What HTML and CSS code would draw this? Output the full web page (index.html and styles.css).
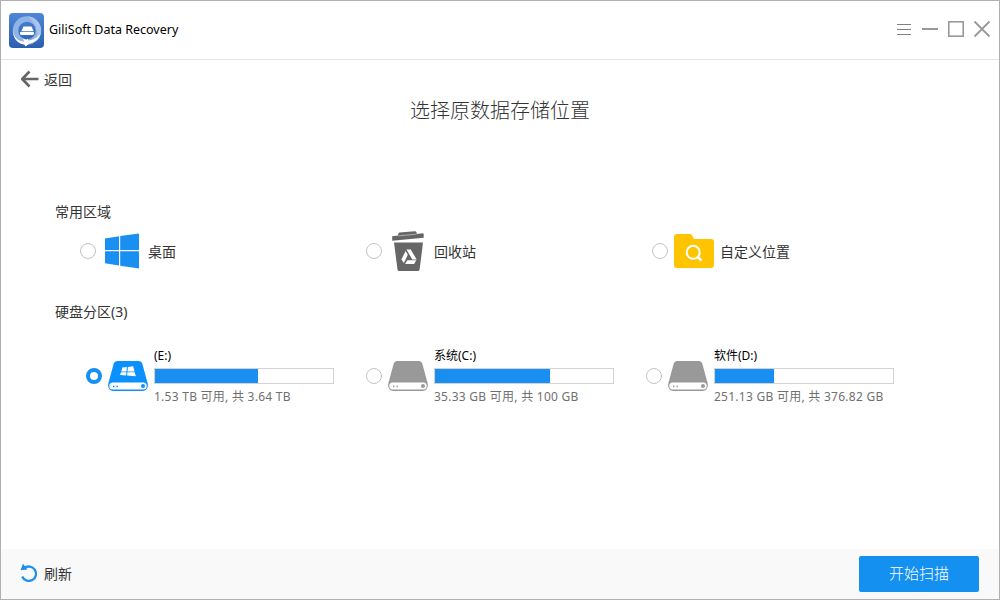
FILE: index.html
```html
<!DOCTYPE html>
<html lang="zh-CN">
    <head>
        <meta charset="UTF-8" />
        <meta name="viewport" content="width=device-width, initial-scale=1.0" />
        <title>GiliSoft Data Recovery</title>
        <link rel="stylesheet" href="styles.css">
    </head>
    <body>
        <!-- Shared drive shape, coloured by the parent -->
        <svg class="defs" width="0" height="0">
            <symbol id="drive" viewBox="0 0 40 30">
                <path d="M9.5 0h21c2 0 3.2 1 3.8 2.8l5.4 19.7c.8 4-1.400 7.500-5 7.500H5.300c-3.600 0-5.800-3.500-5-7.500L5.700 2.800C6.300 1 7.500 0 9.500 0z" fill="currentColor" />
                <rect x="1.300" y="21.500" width="37.400" height="7.100" rx="3.500" fill="#fff" />
                <path d="M5 24.700h1.500v1.600H5zM8.500 24.700H10v1.600H8.500z" fill="currentColor" />
                <circle cx="35" cy="25" r="2" fill="currentColor" />
            </symbol>
        </svg>

        <div class="window">
            <header class="titlebar">
                <svg class="logo" width="35" height="35" viewBox="0 0 35 35">
                    <defs>
                        <linearGradient id="logo-bg" x1="0" y1="0" x2="0" y2="1">
                            <stop offset="0" stop-color="#4f86d6" />
                            <stop offset="1" stop-color="#2b5eb0" />
                        </linearGradient>
                    </defs>
                    <rect width="35" height="35" rx="4" fill="url(#logo-bg)" />
                    <circle cx="18" cy="17.500" r="11.500" fill="none" stroke="#8fb3e6" stroke-width="5.500" />
                    <path d="M19 3.500a14 14 0 0 1 13 14c0 5-2 9-6 11.500 2-3 2.500-6 2-9.500C27.500 12 24 8 19 3.500z" fill="#a9c4ec" />
                    <path d="M4 16c0 8 4.500 12 11 12.500L14 25.500l8 3.500-5.500 4.500-1-2C8 30.500 3.500 25 4 16z" fill="#fff" />
                    <path d="M15 29l4-3.500v2c5-.2 9.500-3 12.500-7-2 6-6.500 9.500-12 10.200L17 33z" fill="#fff" />
                    <path d="M14.500 13.500h8l2 4.500h-12z" fill="#fff" />
                    <rect x="11" y="18.700" width="14" height="3.200" rx="1.300" fill="#fff" />
                </svg>
                <h1 class="app-name">GiliSoft Data Recovery</h1>
                <svg class="controls" width="96" height="20" viewBox="0 0 96 20">
                    <path d="M1 4.500h14M1 9.500h14M1 14.500h14" stroke="#808080" />
                    <path d="M26 9h16" stroke="#999" stroke-width="2" />
                    <rect x="52.800" y="1.800" width="14.400" height="14.400" fill="none" stroke="#999" stroke-width="1.600" />
                    <path d="M78.500 1.500l15 15M93.500 1.500l-15 15" stroke="#999" stroke-width="1.800" />
                </svg>
            </header>

            <main class="content">
                <div class="back">
                    <svg width="20" height="18" viewBox="0 0 20 18">
                        <path d="M9.500 1.500L2.200 9l7.300 7.500M2.500 9H18.500" fill="none" stroke="#666" stroke-width="2.600" stroke-linejoin="round" />
                    </svg>
                    <span>返回</span>
                </div>

                <h2 class="heading">选择原数据存储位置</h2>

                <h3 class="section-title">常用区域</h3>
                <div class="places">
                    <div class="place">
                        <span class="radio"></span>
                        <svg class="place-icon icon-desktop" width="34" height="36" viewBox="0 0 34 36">
                            <path d="M0 5.500L14 3.200V17H0zM15.200 3L34 .400V17H15.200zM0 18.300h14v14.200L0 30.300zM15.200 18.300H34V35.500l-18.800-2.700z" fill="#198ff1" />
                        </svg>
                        <span>桌面</span>
                    </div>
                    <div class="place">
                        <span class="radio"></span>
                        <svg class="place-icon icon-bin" width="32" height="40" viewBox="0 0 32 40">
                            <path d="M.200 5.200L6.200 4.600V3.200Q6.200 1.800 7.600 1.600L22.500 .300Q24.300 .200 24.600 1.600L24.700 2.900 30.700 2.300Q31.700 2.300 31.700 3.300V6.800L.200 9.800zM2 11.500h29L27.600 38.500Q27.300 40 25.800 40H7.200Q5.700 40 5.500 38.500z" fill="#666" />
                            <path d="M6.500 4.900L24.500 3.100" stroke="#ddd" stroke-width=".6" />
                            <path d="M14.500 18.500h4.200l6 10h-4.400zM13.600 19.900l2.200 3.800-3.900 8.400-2.500-3.500zM15.300 29.300h9l-2.200 3.700h-9z" fill="#fff" />
                        </svg>
                        <span>回收站</span>
                    </div>
                    <div class="place">
                        <span class="radio"></span>
                        <svg class="place-icon icon-folder" width="40" height="34" viewBox="0 0 40 34">
                            <path d="M3 0h12.500c1.500 0 2.200.600 2.800 1.800L20 5h17a3 3 0 0 1 3 3v23a3 3 0 0 1-3 3H3a3 3 0 0 1-3-3V3a3 3 0 0 1 3-3z" fill="#ffc400" />
                            <circle cx="19.200" cy="18.300" r="6.500" fill="none" stroke="#fff" stroke-width="2" />
                            <path d="M23.800 23l3.700 3.700" stroke="#fff" stroke-width="2.600" />
                        </svg>
                        <span>自定义位置</span>
                    </div>
                </div>

                <h3 class="section-title">硬盘分区(3)</h3>
                <div class="drives">
                    <div class="drive">
                        <span class="radio checked"></span>
                        <svg class="drive-icon system" width="40" height="30" viewBox="0 0 40 30">
                            <use href="#drive" />
                            <path d="M14.300 6.600l4.600-.600-.400 4.500h-5.200zM19.900 5.900l5.300-.600 1.300 5.200h-7zM13 11.300h5.400l-.300 3.200-6.100-.600zM19.400 11.300h7.300l1.200 4-8.800-.800z" fill="#fff" />
                        </svg>
                        <div class="drive-info">
                            <div class="drive-name">(E:)</div>
                            <div class="bar"><div class="bar-fill" style="width: 58%"></div></div>
                            <div class="drive-space">1.53 TB 可用, 共 3.64 TB</div>
                        </div>
                    </div>
                    <div class="drive">
                        <span class="radio"></span>
                        <svg class="drive-icon" width="40" height="30"><use href="#drive" /></svg>
                        <div class="drive-info">
                            <div class="drive-name">系统(C:)</div>
                            <div class="bar"><div class="bar-fill" style="width: 64.67%"></div></div>
                            <div class="drive-space">35.33 GB 可用, 共 100 GB</div>
                        </div>
                    </div>
                    <div class="drive">
                        <span class="radio"></span>
                        <svg class="drive-icon" width="40" height="30"><use href="#drive" /></svg>
                        <div class="drive-info">
                            <div class="drive-name">软件(D:)</div>
                            <div class="bar"><div class="bar-fill" style="width: 33.36%"></div></div>
                            <div class="drive-space">251.13 GB 可用, 共 376.82 GB</div>
                        </div>
                    </div>
                </div>
            </main>

            <footer class="footer">
                <div class="refresh">
                    <svg width="18" height="20" viewBox="0 0 18 20">
                        <path d="M4.200 5.200A7.200 7.200 0 1 1 2.200 13.500" fill="none" stroke="#198ff1" stroke-width="2.300" />
                        <path d="M3 .800L7.500 6.500 .500 7.300z" fill="#198ff1" />
                    </svg>
                    <span>刷新</span>
                </div>
                <button class="scan">开始扫描</button>
            </footer>
        </div>
    </body>
</html>
```

FILE: styles.css
```css
* {
    box-sizing: border-box;
}
body {
    margin: 0;
    font-family: "Noto Sans", "Noto Sans CJK SC", sans-serif;
    font-size: 14px;
    color: #333;
}
.defs {
    display: block;
}
.window {
    display: flex;
    flex-direction: column;
    width: 1000px;
    height: 600px;
    border: 1px solid #b0b0b0;
    background: #fff;
}
h1,
h2,
h3 {
    margin: 0;
    font-weight: normal;
}

/* Title bar */
.titlebar {
    display: flex;
    align-items: center;
    height: 59px;
    padding: 0 7px 0 8px;
    border-bottom: 1px solid #e5e5e5;
}
.app-name {
    margin-left: 5px;
    font-size: 12.5px;
    line-height: 20px;
    color: #000;
}
.controls {
    margin-left: auto;
}

/* Content */
.content {
    flex: 1;
}
.back {
    display: flex;
    align-items: center;
    gap: 4px;
    height: 20px;
    margin: 9px 0 0 19px;
}
.heading {
    margin-top: 7px;
    font-size: 20px;
    font-weight: 300;
    line-height: 30px;
    text-align: center;
}
.section-title {
    padding-left: 54px;
    font-size: 14px;
    line-height: 20px;
}
.heading + .section-title {
    margin-top: 76px;
}
.places {
    display: grid;
    grid-template-columns: repeat(3, 286px);
    height: 58px;
    padding-left: 79px;
}
.place,
.drive {
    display: flex;
    align-items: center;
}
.radio {
    flex: none;
    width: 16px;
    height: 16px;
    border: 1px solid #c4c4c4;
    border-radius: 50%;
}
.radio.checked {
    border: 4px solid #198ff1;
}
.icon-desktop {
    margin: 0 9px;
}
.icon-bin {
    margin: 0 10px;
}
.icon-folder {
    margin: 0 6px;
}
.places + .section-title {
    margin-top: 22px;
}
.drives {
    display: grid;
    grid-template-columns: repeat(3, 280px);
    margin-top: 23px;
    padding-left: 85px;
}
.drive-icon {
    margin: 0 6px;
    color: #999;
}
.drive-icon.system {
    color: #0a91ff;
}
.drive-info {
    width: 180px;
    font-size: 12px;
}
.drive-name {
    height: 23px;
    line-height: 21px;
    color: #000;
}
.bar {
    height: 16px;
    border: 1px solid #d3d3d3;
}
.bar-fill {
    height: 100%;
    background: #198ff1;
}
.drive-space {
    height: 23px;
    line-height: 25px;
    letter-spacing: 0.26px;
    color: #707070;
    white-space: nowrap;
}

/* Footer */
.footer {
    display: flex;
    align-items: center;
    justify-content: space-between;
    height: 50px;
    padding: 0 20px 0 19px;
    background: #f9f9f9;
}
.refresh {
    display: flex;
    align-items: center;
    gap: 6px;
    padding-bottom: 2px;
}
.scan {
    width: 120px;
    height: 36px;
    padding: 0 0 4px;
    border: 0;
    border-radius: 2px;
    background: #1390f0;
    color: #fff;
    font-family: inherit;
    font-size: 15px;
    font-weight: 300;
}
```
